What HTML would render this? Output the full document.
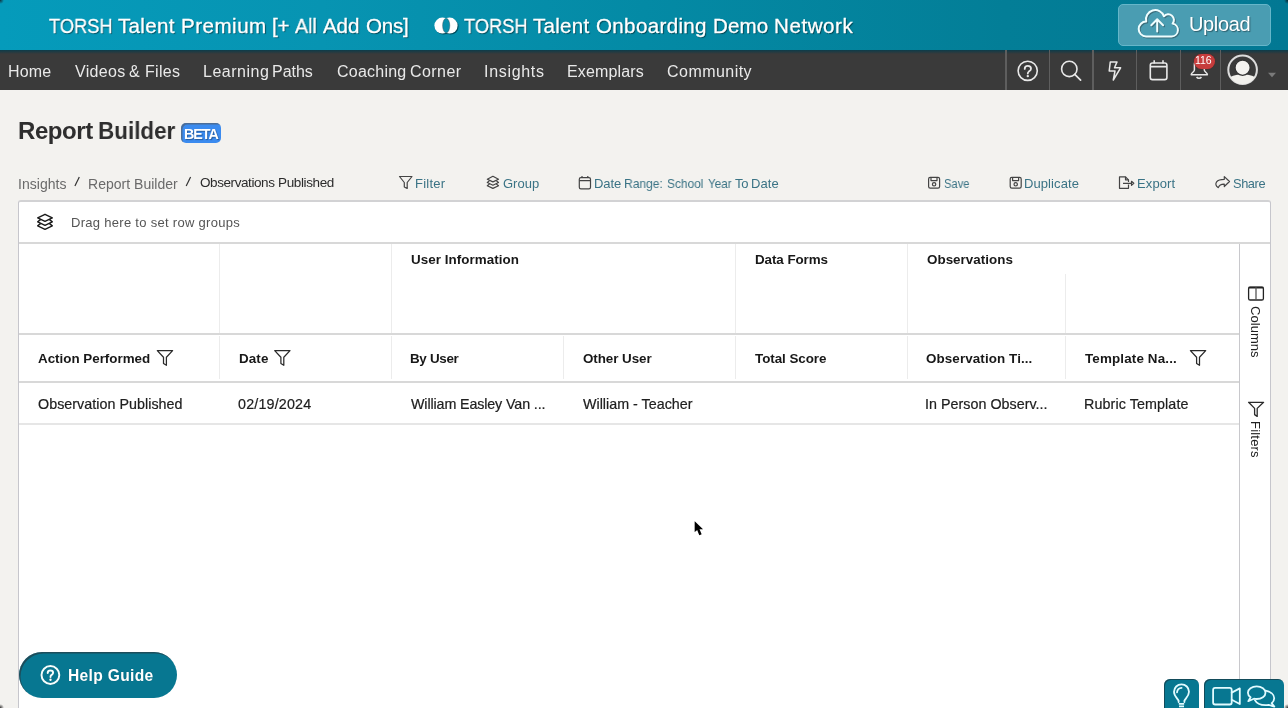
<!DOCTYPE html>
<html><head><meta charset="utf-8">
<style>
html,body{margin:0;padding:0;}
body{width:1288px;height:708px;overflow:hidden;position:relative;background:#f3f2ef;font-family:"Liberation Sans",sans-serif;}
.t{position:absolute;white-space:pre;font-family:"Liberation Sans",sans-serif;will-change:transform;}
.a{position:absolute;}
#hdr{left:0;top:0;width:1288px;height:50px;background:linear-gradient(90deg,#059bbb 0%,#0794b2 25%,#048aa5 50%,#037e97 78%,#027893 100%);}
#nav{left:0;top:50px;width:1288px;height:40px;background:#3a3a3a;}
#navshadow{left:0;top:50px;width:1288px;height:3.5px;background:linear-gradient(#0c3c4a,#3a3a3a);}
.sep{position:absolute;top:50px;width:1.3px;height:40px;background:#5e5e5e;}
#upl{left:1117.5px;top:4px;width:151.5px;height:39.6px;border-radius:5px;background:#4a9db2;border:1px solid #66b6c9;box-sizing:content-box;}
#grid{left:18px;top:200px;width:1251px;height:520px;background:#fff;border:1px solid #c6c6cc;border-top:2px solid #d2d2d4;border-radius:3px;}
.hl{position:absolute;height:2px;background:#d8d8d8;}
.vl{position:absolute;width:1px;background:#ececec;}
#beta{left:180.7px;top:123.3px;width:40.2px;height:19.7px;border-radius:5px;background:#3b8bef;box-shadow:1.5px 1.5px 0 rgba(85,90,95,.6) inset;}
#help{left:18.7px;top:652.3px;width:158.3px;height:45.3px;border-radius:23px;background:#077791;box-shadow:inset 1.5px 1.5px 0 rgba(45,50,55,.6);}
.bx{position:absolute;top:679px;height:40px;border-radius:6px;background:#077791;box-shadow:inset 1px 1px 0 rgba(30,40,45,.55);}
</style></head><body>
<div id="hdr" class="a"></div>
<div id="nav" class="a"></div>
<div id="navshadow" class="a"></div>
<div class="sep" style="left:1005.4px"></div>
<div class="sep" style="left:1048.8px"></div>
<div class="sep" style="left:1092.3px"></div>
<div class="sep" style="left:1136px"></div>
<div class="sep" style="left:1179.6px"></div>
<div class="sep" style="left:1219.9px"></div>
<div id="upl" class="a"></div>

<!-- header logo -->
<svg class="a" style="left:433px;top:16px;filter:drop-shadow(1px 1px 0.6px rgba(0,0,0,.45))" width="27" height="20" viewBox="0 0 27 20">
  <g>
  <circle cx="9.4" cy="9.6" r="8" fill="#fff"/>
  <circle cx="16.6" cy="9.6" r="8" fill="#fff"/>
  <ellipse cx="13.2" cy="9.6" rx="3.6" ry="7.3" fill="#088fab" stroke="rgba(40,60,70,.55)" stroke-width=".7"/>
  </g>
</svg>
<!-- cloud icon -->
<svg class="a" style="left:1130px;top:4px" width="54" height="40" viewBox="1130 4 54 40">
  <g fill="none" stroke-width="2" stroke-linecap="round" stroke-linejoin="round">
  <path d="M1146 36.4 H1171.6 A6.45 6.45 0 0 0 1172.6 23.6 A5.6 5.6 0 0 0 1164 16.3 A9.3 9.3 0 0 0 1146.2 21.6 A7.4 7.4 0 0 0 1146 36.4 Z M1157.2 31.4 V19.6 M1151.3 25.2 L1157.2 19.3 L1163.1 25.2" stroke="rgba(40,50,55,.45)" transform="translate(1,1)"/>
  <path d="M1146 36.4 H1171.6 A6.45 6.45 0 0 0 1172.6 23.6 A5.6 5.6 0 0 0 1164 16.3 A9.3 9.3 0 0 0 1146.2 21.6 A7.4 7.4 0 0 0 1146 36.4 Z M1157.2 31.4 V19.6 M1151.3 25.2 L1157.2 19.3 L1163.1 25.2" stroke="#effeff"/>
  </g>
</svg>

<!-- nav icons -->
<svg class="a" style="left:1006px;top:50px" width="280" height="40" viewBox="1006 50 280 40" fill="none" stroke="#e8e8e8" stroke-width="1.6">
  <!-- help -->
  <circle cx="1027.7" cy="70.8" r="9.6"/>
  <path d="M1024.7 68.9 C1024.7 67 1026 65.9 1027.8 65.9 C1029.7 65.9 1031 67.1 1031 68.7 C1031 70.3 1029.8 70.9 1028.8 71.6 C1028 72.2 1027.8 72.8 1027.8 73.6" stroke-width="1.8" stroke-linecap="round"/>
  <circle cx="1027.8" cy="76.1" r="1.2" fill="#e8e8e8" stroke="none"/>
  <!-- search -->
  <circle cx="1069.3" cy="68.9" r="7.7"/>
  <path d="M1074.8 74.4 L1080.6 80.2" stroke-width="1.7" stroke-linecap="round"/>
  <!-- bolt -->
  <path d="M1110.3 61.9 H1117 L1114.5 67.8 H1120.6 L1113.3 80 L1115 71 H1109.2 Z" stroke-linejoin="round" stroke-width="1.5"/>
  <!-- calendar -->
  <rect x="1150.3" y="63" width="16.6" height="16.6" rx="2.2"/>
  <path d="M1150.3 66.6 H1166.9 M1154.2 60.3 V63.5 M1163 60.3 V63.5"/>
  <!-- bell -->
  <path d="M1194.4 64 V70 C1194.4 72 1191.2 72.5 1191.2 74.8 H1207.4 C1207.4 72.5 1204.3 72 1204.3 70 V64 A4.95 4.95 0 0 0 1194.4 64 Z" stroke-linejoin="round" stroke-width="1.5"/>
  <path d="M1196.6 77 A2.7 2.3 0 0 0 1201.4 77" stroke-width="1.5"/>
  <!-- avatar -->
  <circle cx="1242.6" cy="69.8" r="14.3" stroke="#dcdcdc" stroke-width="2"/>
  <path d="M1230.3 77 C1234 75.2 1238.2 74.6 1242.6 74.6 C1247 74.6 1251.2 75.2 1254.9 77 A14.3 14.3 0 0 1 1230.3 77 Z" fill="#f1f0ec" stroke="none"/>
  <circle cx="1242.6" cy="67.7" r="7.6" fill="#f3f2ef" stroke="#333" stroke-width="1.3"/>
  <path d="M1268 72.8 H1276 L1272 77.3 Z" fill="#7a7a7a" stroke="none"/>
</svg>
<!-- badge -->
<div class="a" style="left:1194px;top:53.5px;width:20.5px;height:15px;border-radius:7.5px;background:#c63d3d;box-shadow:0 0 1px rgba(120,20,20,.8)"></div>
<span class="t" style="left:1195px;top:55px;font-size:10.5px;line-height:10.5px;font-weight:400;color:#fff;letter-spacing:-0.1px;font-family:'Liberation Sans',sans-serif">116</span>

<div id="beta" class="a"></div>
<span class="t" style="left:183.5px;top:127px;font-size:14.3px;line-height:14px;font-weight:700;color:#fff;letter-spacing:-1.05px;text-shadow:1px 1px 1px rgba(0,0,0,.35)">BETA</span>

<!-- breadcrumb slashes -->
<svg class="a" style="left:70px;top:170px" width="130" height="24" viewBox="70 170 130 24" stroke="#333" stroke-width="1.2">
  <path d="M79.3 177 L74.9 186"/>
  <path d="M190.6 177 L186.2 186"/>
</svg>

<!-- toolbar icons -->
<svg class="a" style="left:395px;top:170px" width="850" height="24" viewBox="395 170 850 24" fill="none" stroke="#444" stroke-width="1.2" stroke-linejoin="round">
  <!-- filter -->
  <path d="M399.5 176.5 H412 L407.2 182.5 V188.5 L404.3 187 V182.5 Z"/>
  <!-- group layers -->
  <path d="M492.9 176.3 L498.5 179.2 L492.9 181.9 L487.3 179.2 Z"/>
  <path d="M489.6 180.6 L487.3 182.5 L492.9 185.2 L498.5 182.5 L496.2 180.6"/>
  <path d="M489.6 183.9 L487.3 185.8 L492.9 188.4 L498.5 185.8 L496.2 183.9"/>
  <!-- calendar -->
  <rect x="579.3" y="177.7" width="11.2" height="11.2" rx="1.6"/>
  <path d="M579.3 180.6 H590.5 M582 176 V178 M587.8 176 V178"/>
  <!-- save -->
  <rect x="928.6" y="177.4" width="11" height="10.8" rx="1.6"/>
  <path d="M931 177.4 V180.6 H937 V177.4"/>
  <circle cx="934.1" cy="184.3" r="1.7"/>
  <!-- duplicate -->
  <rect x="1010.2" y="177.4" width="11" height="10.8" rx="1.6"/>
  <path d="M1012.6 177.4 V180.6 H1018.6 V177.4"/>
  <circle cx="1015.7" cy="184.3" r="1.7"/>
  <!-- export -->
  <path d="M1128.5 184.5 V188.3 H1119.5 V176.8 H1125.5 L1128.5 179.8 V182"/>
  <path d="M1125.5 176.8 V179.8 H1128.5"/>
  <path d="M1123 183.3 H1131.5 M1131.5 181.3 L1133.8 183.3 L1131.5 185.3 Z"/>
  <!-- share -->
  <path d="M1224.3 176.6 L1229.5 181.5 L1224.3 186.5 V184.2 C1221 184.1 1219.3 184.8 1218.3 187.6 C1215.6 186.4 1215.3 183.6 1216.6 181.9 C1218 180 1220.5 179.3 1224.3 179.3 Z"/>
</svg>

<div id="grid" class="a"></div>
<!-- grid internals -->
<div class="hl" style="left:19px;top:242px;width:1251px;"></div>
<div class="hl" style="left:19px;top:333px;width:1220px;"></div>
<div class="hl" style="left:19px;top:381px;width:1220px;"></div>
<div class="a" style="left:19px;top:423px;width:1220px;height:1.5px;background:#e6e6e6"></div>
<div class="a" style="left:1239px;top:244px;width:1px;height:470px;background:#c8c8cc"></div>
<div class="vl" style="left:219px;top:244px;height:89px"></div>
<div class="vl" style="left:391px;top:244px;height:89px"></div>
<div class="vl" style="left:735px;top:244px;height:89px"></div>
<div class="vl" style="left:907px;top:244px;height:89px"></div>
<div class="vl" style="left:1065px;top:274px;height:59px"></div>
<div class="vl" style="left:219px;top:336px;height:43px"></div>
<div class="vl" style="left:391px;top:336px;height:43px"></div>
<div class="vl" style="left:563px;top:336px;height:43px"></div>
<div class="vl" style="left:735px;top:336px;height:43px"></div>
<div class="vl" style="left:907px;top:336px;height:43px"></div>
<div class="vl" style="left:1065px;top:336px;height:43px"></div>

<!-- grid icons -->
<svg class="a" style="left:30px;top:205px" width="30" height="30" viewBox="30 205 30 30" fill="none" stroke="#1a1a1a" stroke-width="1.4" stroke-linejoin="round">
  <path d="M45 214.3 L52.3 217.9 L45 221.4 L37.7 217.9 Z"/>
  <path d="M40.7 219.4 L37.7 221.9 L45 225.4 L52.3 221.9 L49.3 219.4"/>
  <path d="M40.7 223.4 L37.7 225.9 L45 229.4 L52.3 225.9 L49.3 223.4"/>
</svg>
<svg class="a" style="left:150px;top:345px" width="1070" height="26" viewBox="150 345 1070 26" fill="none" stroke="#2a2a2a" stroke-width="1.25" stroke-linejoin="round">
  <path d="M157.3 350.6 H172.6 L166.4 357.2 V365.3 L163.5 363.4 V357.2 Z"/>
  <path d="M274.7 350.6 H290 L283.8 357.2 V365.3 L280.9 363.4 V357.2 Z"/>
  <path d="M1190.4 350.6 H1205.7 L1199.5 357.2 V365.3 L1196.6 363.4 V357.2 Z"/>
</svg>
<!-- sidebar -->
<svg class="a" style="left:1240px;top:280px" width="30" height="190" viewBox="1240 280 30 190" fill="none" stroke="#222" stroke-width="1.3" stroke-linejoin="round">
  <rect x="1248.6" y="287.2" width="14.8" height="12.8" rx="1.6"/>
  <path d="M1248.6 287.6 H1263.4" stroke-width="1.8"/>
  <path d="M1256 287.2 V300" stroke="#555"/>
  <path d="M1248.6 402.3 H1263.6 L1257.2 408.4 V416.4 L1254.6 414.6 V408.4 Z" stroke="#2a2a2a"/>
</svg>
<span class="t" style="left:1249px;top:305.5px;font-size:13px;line-height:13px;color:#222;writing-mode:vertical-rl;letter-spacing:0.05px">Columns</span>
<span class="t" style="left:1249px;top:421px;font-size:13px;line-height:13px;color:#222;writing-mode:vertical-rl;letter-spacing:0.2px">Filters</span>

<!-- help guide -->
<div id="help" class="a"></div>
<svg class="a" style="left:38px;top:663px;filter:drop-shadow(0.8px 0.8px 0.4px rgba(0,0,0,.35))" width="26" height="26" viewBox="38 663 26 26" fill="none" stroke="#f4ffff" stroke-width="2">
  <circle cx="50.4" cy="675" r="8.9"/>
  <path d="M47.7 672.9 C47.7 671.4 48.9 670.5 50.4 670.5 C52 670.5 53.1 671.5 53.1 672.7 C53.1 674 52.1 674.5 51.3 675.1 C50.7 675.6 50.5 676.1 50.5 677" stroke-linecap="round" stroke-width="2"/>
  <circle cx="50.5" cy="679.7" r="1.2" fill="#fff" stroke="none"/>
</svg>

<!-- bottom right boxes -->
<div class="bx" style="left:1164px;width:35px;"></div>
<div class="bx" style="left:1204px;width:80px;"></div>
<svg class="a" style="left:1164px;top:679px" width="124" height="29" viewBox="1164 679 124 29" fill="none" stroke="#e2fbff" stroke-width="1.8" stroke-linejoin="round" stroke-linecap="round">
  <path d="M1178.6 702 V700.6 C1177.5 698.5 1174 696 1174 691.8 A7.5 7.5 0 1 1 1189 691.8 C1189 696 1185.5 698.5 1184.4 700.6 V702"/>
  <path d="M1178.8 703.8 H1184.2 M1179 706.4 H1184" stroke-linecap="butt"/>
  <path d="M1177 692.4 A5 5 0 0 1 1181.6 687.9"/>
  <rect x="1213.1" y="687.9" width="18.6" height="16.6" rx="2"/>
  <path d="M1231.7 692.6 L1239.8 688.4 V704 L1231.7 699.8"/>
  <path d="M1250.6 697.3 L1248.3 701.2 L1253.9 698.7 C1254.8 698.9 1255.7 699 1256.7 699 C1261.6 699 1265.5 696.2 1265.5 692.7 C1265.5 689.2 1261.6 686.4 1256.7 686.4 C1251.8 686.4 1247.9 689.2 1247.9 692.7 C1247.9 694.5 1248.9 696.1 1250.6 697.3 Z"/>
  <path d="M1265.6 690.6 C1270.6 691.6 1274.2 694.7 1274.2 698.3 C1274.2 700.2 1273.3 701.9 1271.7 703.2 L1274.3 706.6 L1268.6 704.8 C1267.6 705.1 1266.5 705.2 1265.4 705.2 C1260.6 705.2 1256.5 703.2 1254.9 700.2"/>
</svg>

<!-- cursor -->
<svg class="a" style="left:690px;top:516px;filter:drop-shadow(0 0.6px 0.6px rgba(0,0,0,.18))" width="20" height="24" viewBox="0 0 20 24">
  <path d="M4.7 5.2 V16 L7.2 13.9 L9.3 19.2 L11.6 18.3 L9.5 13.2 H13 Z" fill="#000"/>
</svg>

<span class="t" style="left:48.50px;top:16px;font-size:20.6px;line-height:20.6px;font-weight:400;color:#fff;letter-spacing:0.000px;transform:scaleX(0.8880);transform-origin:0.00px 0;text-shadow:1px 1px 1px rgba(0,0,0,.5);-webkit-text-stroke:0.3px #fff;">TORSH</span>
<span class="t" style="left:118.40px;top:16px;font-size:20.6px;line-height:20.6px;font-weight:400;color:#fff;letter-spacing:0.294px;text-shadow:1px 1px 1px rgba(0,0,0,.5);-webkit-text-stroke:0.3px #fff;">Talent</span>
<span class="t" style="left:181.00px;top:16px;font-size:20.6px;line-height:20.6px;font-weight:400;color:#fff;letter-spacing:0.478px;text-shadow:1px 1px 1px rgba(0,0,0,.5);-webkit-text-stroke:0.3px #fff;">Premium</span>
<span class="t" style="left:271.90px;top:16px;font-size:20.6px;line-height:20.6px;font-weight:400;color:#fff;letter-spacing:-0.222px;text-shadow:1px 1px 1px rgba(0,0,0,.5);-webkit-text-stroke:0.3px #fff;">[+</span>
<span class="t" style="left:295.20px;top:16px;font-size:20.6px;line-height:20.6px;font-weight:400;color:#fff;letter-spacing:0.000px;transform:scaleX(0.9547);transform-origin:0.00px 0;text-shadow:1px 1px 1px rgba(0,0,0,.5);-webkit-text-stroke:0.3px #fff;">All</span>
<span class="t" style="left:323.30px;top:16px;font-size:20.6px;line-height:20.6px;font-weight:400;color:#fff;letter-spacing:-0.145px;text-shadow:1px 1px 1px rgba(0,0,0,.5);-webkit-text-stroke:0.3px #fff;">Add</span>
<span class="t" style="left:365.70px;top:16px;font-size:20.6px;line-height:20.6px;font-weight:400;color:#fff;letter-spacing:-0.223px;text-shadow:1px 1px 1px rgba(0,0,0,.5);-webkit-text-stroke:0.3px #fff;">Ons]</span>
<span class="t" style="left:463.50px;top:16px;font-size:20.6px;line-height:20.6px;font-weight:400;color:#fff;letter-spacing:0.000px;transform:scaleX(0.8880);transform-origin:0.00px 0;text-shadow:1px 1px 1px rgba(0,0,0,.5);-webkit-text-stroke:0.3px #fff;">TORSH</span>
<span class="t" style="left:533.40px;top:16px;font-size:20.6px;line-height:20.6px;font-weight:400;color:#fff;letter-spacing:0.234px;text-shadow:1px 1px 1px rgba(0,0,0,.5);-webkit-text-stroke:0.3px #fff;">Talent</span>
<span class="t" style="left:596.30px;top:16px;font-size:20.6px;line-height:20.6px;font-weight:400;color:#fff;letter-spacing:0.325px;text-shadow:1px 1px 1px rgba(0,0,0,.5);-webkit-text-stroke:0.3px #fff;">Onboarding</span>
<span class="t" style="left:713.00px;top:16px;font-size:20.6px;line-height:20.6px;font-weight:400;color:#fff;letter-spacing:0.107px;text-shadow:1px 1px 1px rgba(0,0,0,.5);-webkit-text-stroke:0.3px #fff;">Demo</span>
<span class="t" style="left:773.70px;top:16px;font-size:20.6px;line-height:20.6px;font-weight:400;color:#fff;letter-spacing:0.545px;text-shadow:1px 1px 1px rgba(0,0,0,.5);-webkit-text-stroke:0.3px #fff;">Network</span>
<span class="t" style="left:1188.50px;top:14px;font-size:20px;line-height:20px;font-weight:400;color:#fff;letter-spacing:-0.351px;text-shadow:1px 1px 1px rgba(0,0,0,.4);">Upload</span>
<span class="t" style="left:8.40px;top:64px;font-size:16px;line-height:16px;font-weight:400;color:#e9e9e9;letter-spacing:0.173px;">Home</span>
<span class="t" style="left:74.70px;top:64px;font-size:16px;line-height:16px;font-weight:400;color:#e9e9e9;letter-spacing:0.333px;">Videos</span>
<span class="t" style="left:129.20px;top:64px;font-size:16px;line-height:16px;font-weight:400;color:#e9e9e9;letter-spacing:0.000px;">&amp;</span>
<span class="t" style="left:145.00px;top:64px;font-size:16px;line-height:16px;font-weight:400;color:#e9e9e9;letter-spacing:0.280px;">Files</span>
<span class="t" style="left:202.60px;top:64px;font-size:16px;line-height:16px;font-weight:400;color:#e9e9e9;letter-spacing:0.504px;">Learning</span>
<span class="t" style="left:272.40px;top:64px;font-size:16px;line-height:16px;font-weight:400;color:#e9e9e9;letter-spacing:-0.029px;">Paths</span>
<span class="t" style="left:336.80px;top:64px;font-size:16px;line-height:16px;font-weight:400;color:#e9e9e9;letter-spacing:0.228px;">Coaching</span>
<span class="t" style="left:410.40px;top:64px;font-size:16px;line-height:16px;font-weight:400;color:#e9e9e9;letter-spacing:0.444px;">Corner</span>
<span class="t" style="left:484.40px;top:64px;font-size:16px;line-height:16px;font-weight:400;color:#e9e9e9;letter-spacing:0.694px;">Insights</span>
<span class="t" style="left:566.70px;top:64px;font-size:16px;line-height:16px;font-weight:400;color:#e9e9e9;letter-spacing:0.140px;">Exemplars</span>
<span class="t" style="left:666.70px;top:64px;font-size:16px;line-height:16px;font-weight:400;color:#e9e9e9;letter-spacing:0.462px;">Community</span>
<span class="t" style="left:17.50px;top:119px;font-size:24px;line-height:24px;font-weight:700;color:#2e2e2e;letter-spacing:-0.408px;">Report</span>
<span class="t" style="left:97.80px;top:119px;font-size:24px;line-height:24px;font-weight:700;color:#2e2e2e;letter-spacing:0.000px;transform:scaleX(0.9344);transform-origin:1.00px 0;">Builder</span>
<span class="t" style="left:17.60px;top:177px;font-size:14px;line-height:14px;font-weight:400;color:#6a6a6a;letter-spacing:0.036px;">Insights</span>
<span class="t" style="left:87.50px;top:177px;font-size:14px;line-height:14px;font-weight:400;color:#6a6a6a;letter-spacing:0.021px;">Report Builder</span>
<span class="t" style="left:199.80px;top:176px;font-size:13.5px;line-height:13.5px;font-weight:400;color:#2b2b2b;letter-spacing:-0.417px;">Observations</span>
<span class="t" style="left:278.00px;top:176px;font-size:13.5px;line-height:13.5px;font-weight:400;color:#2b2b2b;letter-spacing:-0.373px;">Published</span>
<span class="t" style="left:415.40px;top:177px;font-size:13px;line-height:13px;font-weight:400;color:#3a7385;letter-spacing:0.228px;">Filter</span>
<span class="t" style="left:503.30px;top:177px;font-size:13px;line-height:13px;font-weight:400;color:#3a7385;letter-spacing:-0.000px;">Group</span>
<span class="t" style="left:594.00px;top:177px;font-size:13px;line-height:13px;font-weight:400;color:#3a7385;letter-spacing:-0.043px;">Date</span>
<span class="t" style="left:624.30px;top:177px;font-size:13px;line-height:13px;font-weight:400;color:#3a7385;letter-spacing:0.000px;transform:scaleX(0.9254);transform-origin:1.00px 0;">Range:</span>
<span class="t" style="left:666.50px;top:177px;font-size:13px;line-height:13px;font-weight:400;color:#3a7385;letter-spacing:0.000px;transform:scaleX(0.9132);transform-origin:0.00px 0;">School</span>
<span class="t" style="left:707.50px;top:177px;font-size:13px;line-height:13px;font-weight:400;color:#3a7385;letter-spacing:0.000px;transform:scaleX(0.8947);transform-origin:0.00px 0;">Year</span>
<span class="t" style="left:734.70px;top:177px;font-size:13px;line-height:13px;font-weight:400;color:#3a7385;letter-spacing:-0.300px;">To</span>
<span class="t" style="left:750.80px;top:177px;font-size:13px;line-height:13px;font-weight:400;color:#3a7385;letter-spacing:0.057px;">Date</span>
<span class="t" style="left:943.80px;top:178px;font-size:12px;line-height:12px;font-weight:400;color:#3a7385;letter-spacing:0.000px;transform:scaleX(0.9285);transform-origin:0.00px 0;">Save</span>
<span class="t" style="left:1024.30px;top:177px;font-size:13px;line-height:13px;font-weight:400;color:#3a7385;letter-spacing:0.092px;">Duplicate</span>
<span class="t" style="left:1136.50px;top:177px;font-size:13px;line-height:13px;font-weight:400;color:#3a7385;letter-spacing:0.108px;">Export</span>
<span class="t" style="left:1233.40px;top:178px;font-size:12.8px;line-height:12.8px;font-weight:400;color:#3a7385;letter-spacing:-0.408px;">Share</span>
<span class="t" style="left:70.60px;top:216px;font-size:13px;line-height:13px;font-weight:400;color:#555;letter-spacing:0.291px;">Drag here to set row groups</span>
<span class="t" style="left:410.90px;top:253px;font-size:13.4px;line-height:13.4px;font-weight:700;color:#181818;letter-spacing:0.049px;">User Information</span>
<span class="t" style="left:754.80px;top:253px;font-size:13.4px;line-height:13.4px;font-weight:700;color:#181818;letter-spacing:-0.069px;">Data Forms</span>
<span class="t" style="left:926.50px;top:253px;font-size:13.4px;line-height:13.4px;font-weight:700;color:#181818;letter-spacing:0.024px;">Observations</span>
<span class="t" style="left:38.00px;top:352px;font-size:13.4px;line-height:13.4px;font-weight:700;color:#181818;letter-spacing:-0.011px;">Action Performed</span>
<span class="t" style="left:238.60px;top:352px;font-size:13.4px;line-height:13.4px;font-weight:700;color:#181818;letter-spacing:0.108px;">Date</span>
<span class="t" style="left:410.30px;top:352px;font-size:13.4px;line-height:13.4px;font-weight:700;color:#181818;letter-spacing:-0.300px;">By User</span>
<span class="t" style="left:582.60px;top:352px;font-size:13.4px;line-height:13.4px;font-weight:700;color:#181818;letter-spacing:-0.066px;">Other User</span>
<span class="t" style="left:755.00px;top:352px;font-size:13.4px;line-height:13.4px;font-weight:700;color:#181818;letter-spacing:-0.048px;">Total Score</span>
<span class="t" style="left:926.40px;top:352px;font-size:13.4px;line-height:13.4px;font-weight:700;color:#181818;letter-spacing:0.103px;">Observation Ti...</span>
<span class="t" style="left:1084.80px;top:352px;font-size:13.4px;line-height:13.4px;font-weight:700;color:#181818;letter-spacing:0.148px;">Template Na...</span>
<span class="t" style="left:37.50px;top:397px;font-size:14.3px;line-height:14.3px;font-weight:400;color:#202020;letter-spacing:0.035px;-webkit-text-stroke:0.2px #202020;">Observation Published</span>
<span class="t" style="left:238.40px;top:397px;font-size:14.3px;line-height:14.3px;font-weight:400;color:#202020;letter-spacing:0.177px;-webkit-text-stroke:0.2px #202020;">02/19/2024</span>
<span class="t" style="left:410.50px;top:397px;font-size:14.3px;line-height:14.3px;font-weight:400;color:#202020;letter-spacing:-0.129px;-webkit-text-stroke:0.2px #202020;">William Easley Van ...</span>
<span class="t" style="left:582.90px;top:397px;font-size:14.3px;line-height:14.3px;font-weight:400;color:#202020;letter-spacing:0.008px;-webkit-text-stroke:0.2px #202020;">William - Teacher</span>
<span class="t" style="left:925.30px;top:397px;font-size:14.3px;line-height:14.3px;font-weight:400;color:#202020;letter-spacing:0.021px;-webkit-text-stroke:0.2px #202020;">In Person Observ...</span>
<span class="t" style="left:1083.50px;top:397px;font-size:14.3px;line-height:14.3px;font-weight:400;color:#202020;letter-spacing:0.097px;-webkit-text-stroke:0.2px #202020;">Rubric Template</span>
<span class="t" style="left:68.40px;top:668px;font-size:15.6px;line-height:15.6px;font-weight:700;color:#fff;letter-spacing:0.318px;text-shadow:0 0 1px rgba(0,0,0,.3);">Help Guide</span>
<div class="a" style="left:-3px;top:-3px;width:7px;height:7px;border-radius:50%;background:radial-gradient(rgba(20,40,50,.8),rgba(20,40,50,0) 70%)"></div>
<div class="a" style="left:1284px;top:-3px;width:7px;height:7px;border-radius:50%;background:radial-gradient(rgba(10,30,40,.8),rgba(10,30,40,0) 70%)"></div>
<div class="a" style="left:-3px;top:704px;width:7px;height:7px;border-radius:50%;background:radial-gradient(rgba(30,30,30,.8),rgba(30,30,30,0) 70%)"></div>
<div class="a" style="left:1284px;top:704px;width:7px;height:7px;border-radius:50%;background:radial-gradient(rgba(30,30,30,.8),rgba(30,30,30,0) 70%)"></div>
</body></html>
